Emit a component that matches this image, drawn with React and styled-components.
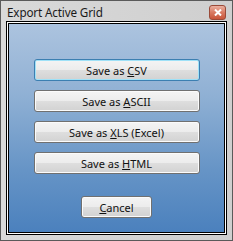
import React from "react"
import styled, { createGlobalStyle } from "styled-components"

const Global = createGlobalStyle`
  html, body { margin: 0; padding: 0; background: #fff; }
  body { font-family: "Noto Sans", "Liberation Sans", sans-serif; }
`

const Window = styled.div`
  width: 233px;
  height: 241px;
  box-sizing: border-box;
  border: 1px solid #5a5a5a;
  background: linear-gradient(to right, #d9d9d9, #d3d3d3 60%, #cfcfcf);
  display: flex;
  flex-direction: column;
  padding: 0 5px 5px 5px;
`

const TitleBar = styled.div`
  height: 20px;
  display: flex;
  align-items: center;
  justify-content: space-between;
  padding-left: 1px;
  padding-right: 1px;
`

const Title = styled.span`
  font-size: 11.7px;
  color: #1a1a1a;
  letter-spacing: -0.15px;
  margin-top: 2px;
`

const CloseBtn = styled.div`
  width: 17px;
  height: 15px;
  box-sizing: border-box;
  border: 1px solid #9a4a38;
  border-radius: 3px;
  background: linear-gradient(to bottom, #eab0a0, #d97a62 50%, #c8553a);
  display: flex;
  align-items: center;
  justify-content: center;
  margin-top: 3px;
`

const Panel = styled.div`
  flex: 1;
  border: 1px solid #000;
  box-shadow: inset 0 0 0 1px #fff, inset 0 0 0 2px #000;
  background: linear-gradient(to bottom, #adc4df, #8fb0d4 35%, #6694c6 70%, #4a80bd);
  display: flex;
  flex-direction: column;
  align-items: center;
  padding-top: 37px;
`

const Button = styled.button`
  width: ${p => p.$w}px;
  height: 22px;
  box-sizing: border-box;
  border: 1px solid ${p => (p.$focus ? "#3c7fb1" : "#707070")};
  border-radius: 3px;
  background: linear-gradient(to bottom, #f4f4f4, #ececec 50%, #dedede 51%, #d2d2d2);
  box-shadow: ${p => (p.$focus ? "inset 0 0 0 1px #9fe1f7" : "inset 0 0 0 1px #fbfbfb")};
  font-family: "Noto Sans", "Liberation Sans", sans-serif;
  font-size: 11px;
  color: #111;
  padding: 0;
  margin-top: ${p => p.$mt}px;
  display: flex;
  align-items: center;
  justify-content: center;
  u { text-underline-offset: 1px; }
`

const X = () => (
  <svg width="8" height="7" viewBox="0 0 8 7">
    <path d="M1 0.5 L7 6.5 M7 0.5 L1 6.5" stroke="#fff" strokeWidth="2" />
  </svg>
)

export default function App() {
  return (
    <>
      <Global />
      <Window>
        <TitleBar>
          <Title>Export Active Grid</Title>
          <CloseBtn><X /></CloseBtn>
        </TitleBar>
        <Panel>
          <Button $w={166} $mt={0} $focus>Save as&nbsp;<u>C</u>SV</Button>
          <Button $w={166} $mt={9}>Save as&nbsp;<u>A</u>SCII</Button>
          <Button $w={166} $mt={9}>Save as&nbsp;<u>X</u>LS (Excel)</Button>
          <Button $w={166} $mt={9}>Save as&nbsp;<u>H</u>TML</Button>
          <Button $w={71} $mt={22}><u>C</u>ancel</Button>
        </Panel>
      </Window>
    </>
  )
}
